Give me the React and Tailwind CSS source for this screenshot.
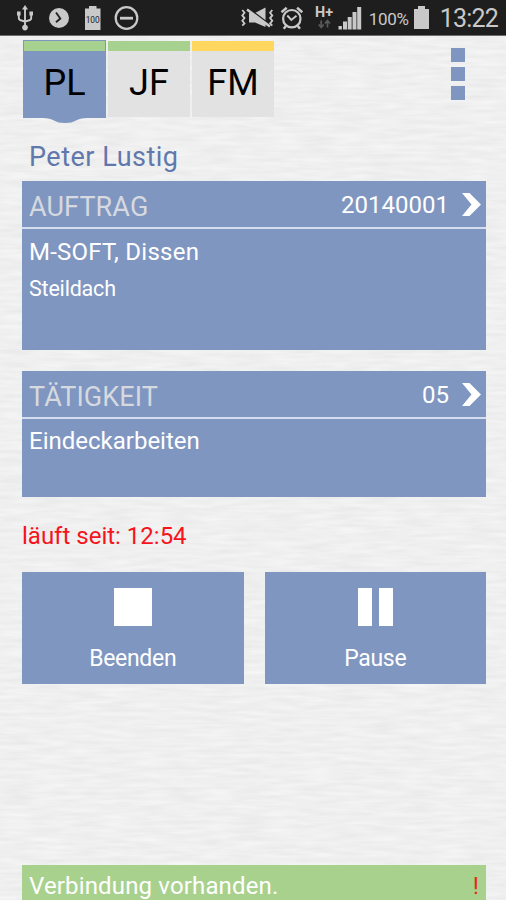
import React from 'react'

const tabs = [
  { initials: 'PL', bar: 'bg-[#a6d18e]', active: true },
  { initials: 'JF', bar: 'bg-[#a6d18e]' },
  { initials: 'FM', bar: 'bg-[#ffd75e]' },
]

const PaperTexture = () => (
  <svg className="absolute inset-0 h-full w-full" aria-hidden="true">
    <filter id="paper" x="0" y="0" width="100%" height="100%" colorInterpolationFilters="sRGB">
      <feTurbulence type="fractalNoise" baseFrequency="0.03 0.24" numOctaves="2" seed="8" />
      <feColorMatrix
        values="0.065 0 0 0 0.906
                0.065 0 0 0 0.906
                0.065 0 0 0 0.906
                0 0 0 0 1"
      />
    </filter>
    <rect width="100%" height="100%" filter="url(#paper)" />
  </svg>
)

const StatusIcons = () => (
  <svg className="h-[35px] w-[150px]" viewBox="0 0 150 35" fill="none" stroke="#c9c9c9">
    {/* usb */}
    <path d="M25 9v18M18.8 13.5v4.2q0 2.3 2.6 2.8l3.6 1M31.2 13.5v4.2q0 2.3-2.6 2.8l-3.6 1" strokeWidth="1.9" />
    <path d="M25 5l3 4.5h-6z" fill="#c9c9c9" stroke="none" />
    <path d="M17 11.5h3.6v4H17zM29.4 11.5H33v4h-3.6z" fill="#c9c9c9" stroke="none" />
    <circle cx="25" cy="27.6" r="2.8" fill="#c9c9c9" stroke="none" />
    {/* clock */}
    <circle cx="59" cy="18" r="10" fill="#c9c9c9" stroke="none" />
    <path d="M56 12.5l4.3 6-4.3 3.7" stroke="#222" strokeWidth="1.9" />
    {/* full battery */}
    <path d="M85 8.5h4V6h7.5v2.5h4V30H85z" fill="#c9c9c9" stroke="none" />
    <text x="92.7" y="23" textAnchor="middle" className="text-[9px]" fill="#222" stroke="none" textLength="14" lengthAdjust="spacingAndGlyphs">100</text>
    {/* do not disturb */}
    <circle cx="126.5" cy="18" r="10.8" strokeWidth="2.2" />
    <path d="M120 18.2h13" strokeWidth="2.8" />
  </svg>
)

const SystemIcons = () => (
  <svg className="h-[35px] w-[127px]" viewBox="240 0 127 35" fill="none" stroke="#c9c9c9">
    {/* muted speaker with vibration marks */}
    <path d="M249 13h6l10.5-5.5v19.5L255 22.5h-6z" fill="#c9c9c9" stroke="none" />
    <path d="M248.5 8.5l22.5 17" stroke="#1e1e1e" strokeWidth="2" />
    <path d="M247 9.5l23 17" strokeWidth="2.6" />
    <path d="M242.3 10l2.2 2.7-2.2 2.7 2.2 2.7-2.2 2.7 2.2 2.7-2.2 2.2M272.3 10l-2.2 2.7 2.2 2.7-2.2 2.7 2.2 2.7-2.2 2.7 2.2 2.2" strokeWidth="1.8" />
    {/* alarm clock */}
    <circle cx="291.8" cy="18.7" r="8.7" strokeWidth="2.2" />
    <path d="M287.3 15.5l4 4.5 5.2-4.2" strokeWidth="1.9" />
    <path d="M281.5 12.2l5.2-4.4M302.3 12.2l-5.2-4.4M286 26l-2.3 2.7M297.7 26l2.3 2.7" strokeWidth="2.5" />
    {/* mobile data */}
    <text x="315" y="17" className="text-[14px] font-bold" fill="#c9c9c9" stroke="none" textLength="18" lengthAdjust="spacingAndGlyphs">H+</text>
    <path d="M321.2 20.5v7M318.7 24.5l2.5 3 2.5-3M327.5 27.5v-7M325 23.5l2.5-3 2.5 3" stroke="#5a5a5a" strokeWidth="1.7" />
    {/* signal strength */}
    <path d="M338.5 26h3.4v3.5h-3.4zM343 21.5h4v8h-4zM347.7 17h4v12.5h-4zM352.5 12h4v17.5h-4zM357.2 7h4v22.5h-4z" fill="#c9c9c9" stroke="none" />
  </svg>
)

const StatusBar = () => (
  <div className="flex h-9 justify-between border-b border-[#6d6d6d] bg-[#1e1e1e] text-[#c9c9c9]">
    <StatusIcons />
    <div className="flex items-center pr-2">
      <SystemIcons />
      <span className="w-[42px] pl-[2px] pt-1 text-[17px] tracking-[-0.3px]">100%</span>
      <svg className="mx-1 h-[23px] w-[17px]" viewBox="0 0 17 23" fill="#c9c9c9">
        <path d="M1 3h4V0h7v3h4v20H1z" />
      </svg>
      <span className="ml-1.5 pt-0.5 text-[25px] tracking-[-0.8px]">13:22</span>
    </div>
  </div>
)

const Tab = ({ initials, bar, active }) => (
  <button
    className={
      active
        ? 'relative flex h-[78px] w-[83px] flex-col bg-[#7f96c1] p-px text-[36px] text-black'
        : 'mt-px flex h-[76px] w-[82px] flex-col bg-[#e2e2e2] text-[36px] text-black'
    }
  >
    <span className={`h-2.5 w-full ${bar}`} />
    <span className="flex w-full flex-1 items-center justify-center pb-[3px] leading-none">{initials}</span>
    {active && (
      <svg className="absolute left-5 top-full h-[5px] w-[44px]" viewBox="0 0 44 5" fill="#7f96c1">
        <path d="M0 0q7 0 11 2.5t11 2.5 11-2.5 11-2.5z" />
      </svg>
    )}
  </button>
)

const Card = ({ title, value, className, children }) => (
  <section className={`flex flex-col bg-[#7f96c1] text-white ${className}`}>
    <header className="flex h-[46px] items-center justify-between pl-[7px] pr-[5px]">
      <h2 className="pt-[7px] text-[27px] tracking-[0.1px] text-[#d6d9df]">{title}</h2>
      <div className="flex items-center gap-[13px]">
        <span className="pt-0.5 text-[24px]">{value}</span>
        <svg className="h-[23px] w-[19px]" viewBox="0 0 19 23" fill="white">
          <path d="M0 0h7.5L19 11.5 7.5 23H0l9.5-11.5z" />
        </svg>
      </div>
    </header>
    <div className="flex-1 border-t-2 border-[#d5def0] pl-[7px]">{children}</div>
  </section>
)

const ActionButton = ({ label, children }) => (
  <button className="flex h-28 flex-1 flex-col items-center bg-[#7f96c1] pt-4 text-white">
    <span className="flex h-[38px] gap-[7px]">{children}</span>
    <span className="mt-[17px] text-[23px] leading-8 tracking-[-0.3px]">{label}</span>
  </button>
)

export default function App() {
  return (
    <div className="relative h-[900px] w-[506px] overflow-hidden bg-[#efefef] font-['Roboto',sans-serif]">
      <PaperTexture />
      <div className="relative flex h-full flex-col">
        <StatusBar />
        <main className="flex flex-1 flex-col pl-[22px] pr-5 pt-1">
          <div className="flex items-start justify-between pl-px">
            <nav className="flex gap-0.5">
              {tabs.map((tab) => (
                <Tab key={tab.initials} {...tab} />
              ))}
            </nav>
            <button className="mr-[21px] mt-2 flex flex-col gap-[5px]" aria-label="Menü">
              <span className="h-3.5 w-3.5 bg-[#7f96c1]" />
              <span className="h-3.5 w-3.5 bg-[#7f96c1]" />
              <span className="h-3.5 w-3.5 bg-[#7f96c1]" />
            </button>
          </div>

          <h1 className="mb-[5px] mt-5 pl-[7px] text-[27px] leading-[38px] tracking-[0.5px] text-[#6078ac]">
            Peter Lustig
          </h1>

          <Card title="AUFTRAG" value="20140001" className="h-[169px]">
            <p className="pt-[7px] text-[24px] leading-8 tracking-[0.25px]">M-SOFT, Dissen</p>
            <p className="pt-[5px] text-[21.5px] leading-8 tracking-[-0.2px]">Steildach</p>
          </Card>

          <Card title="TÄTIGKEIT" value="05" className="mt-[21px] h-[126px]">
            <p className="pt-[6px] text-[24px] leading-8">Eindeckarbeiten</p>
          </Card>

          <p className="mt-[23px] text-[24px] leading-8 text-[#f5141b]">läuft seit: 12:54</p>

          <div className="mt-5 flex gap-[21px]">
            <ActionButton label="Beenden">
              <span className="w-[38px] bg-white" />
            </ActionButton>
            <ActionButton label="Pause">
              <span className="w-3.5 bg-white" />
              <span className="w-3.5 bg-white" />
            </ActionButton>
          </div>

          <footer className="mt-auto flex h-[35px] items-center justify-between bg-[#a9d18e] pl-[7px] pr-[7px] pt-1.5 text-[24px] text-white">
            <span className="tracking-[0.15px]">Verbindung vorhanden.</span>
            <span className="text-[#e52a1d]">!</span>
          </footer>
        </main>
      </div>
    </div>
  )
}
